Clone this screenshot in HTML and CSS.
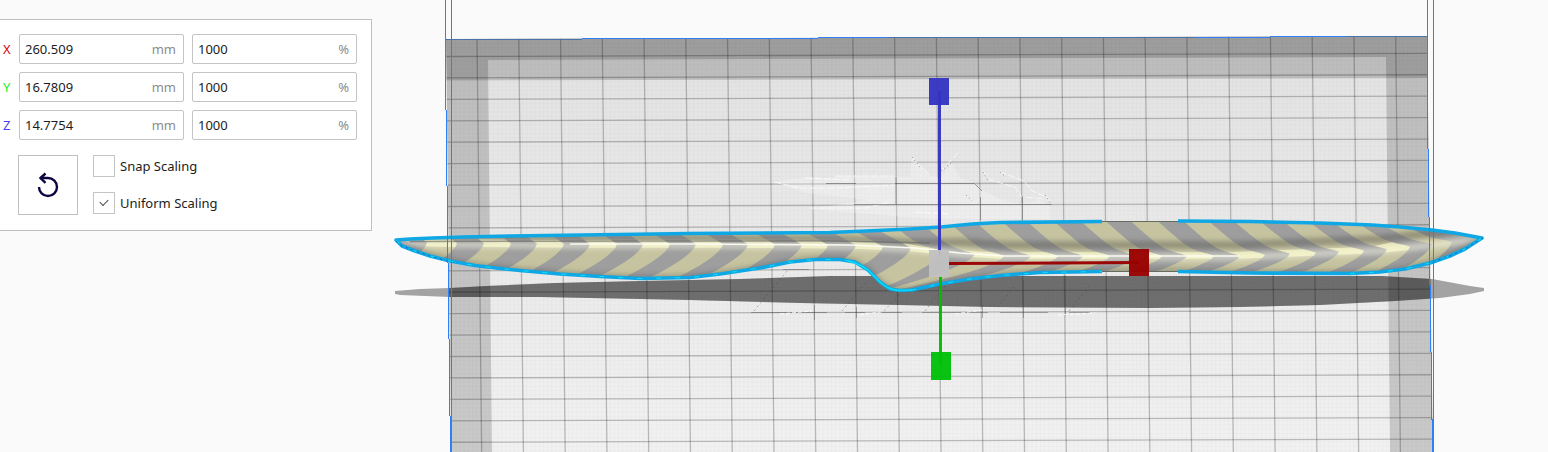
FILE: index.html
```html
<!DOCTYPE html>
<html lang="en">
<head>
<meta charset="utf-8">
<title>Scale tool</title>
<link rel="stylesheet" href="styles.css">
</head>
<body>
<main class="workspace">
<svg class="scene" viewBox="0 0 1548 452" preserveAspectRatio="xMidYMin slice" role="img" aria-label="Build plate with the scaled model">
  <defs>
    <linearGradient id="bedFill" x1="0" y1="0" x2="0" y2="1"><stop offset="0" stop-color="#e2e2e2"/><stop offset="1" stop-color="#f2f2f2"/></linearGradient>
    <pattern id="fine" width="4.176" height="4.286" patternUnits="userSpaceOnUse"><path d="M0 .5H4.2M.5 0V4.3" stroke="#000" stroke-opacity=".025"/></pattern>
    <clipPath id="bedClip"><path d="M446 39 1427 36 1433 452H451Z"/></clipPath>
    <clipPath id="bodyClip"><path id="bodyClipPath"/></clipPath>
    <filter id="soft" x="-5%" y="-100%" width="110%" height="300%"><feGaussianBlur stdDeviation="2.4"/></filter>
  </defs>
  <g clip-path="url(#bedClip)">
    <path d="M440 30H1440V452H440Z" fill="url(#bedFill)"/>
    <path d="M440 30H1440V452H440Z" fill="url(#fine)"/>
    <g id="grid" fill="none" stroke="#000" stroke-opacity=".23" stroke-width="1.300"></g>
    <path d="M440 30H1440V452H1390L1386 57 488 60 492 452H440Z" fill="#000" fill-opacity=".165"/>
    <path d="M440 30H1440V78L440 80.500Z" fill="#000" fill-opacity=".165"/>
  </g>
  <g fill="none">
    <path d="M806 177 830 178 840 176H893L910 177 911 158 919 164 929 175 941 178 952 163 960 178 975 183 983 191 1000 199 1020 204 1040 200 1050 206V219H930L810 209 868 200 806 193 774 182Z" fill="#fff" fill-opacity=".24"/>
    <path d="M774 182 800 188H835L895 185M810 208H865L891 202M835 176H893M806 178 850 180M912 158 929 174M941 171 958 153M983 171 990 180 1015 187 1022 197 1045 199M1000 172 1024 181 1032 191 1047 197 1052 205M915 212 950 214" stroke="#fff" stroke-width="1" stroke-opacity=".7" stroke-dasharray="7 2"/>
    <path d="M826 183.500H856M895 183.500H974M896 177V204M854 204.500H1052M980.500 197V220M974 183 982 191M1022.500 196V220" stroke="#555" stroke-opacity=".55"/>
    <path d="M912 157 920 167M941 171 952 162M983 172 988 180M1000 172 1006 177M1045 195 1052 205M966 195 972 201" stroke="#888" stroke-dasharray="1 3"/>
  </g>
  <path d="M395 291 420 289 450 288 486 286 555 283 640 281 740 279 830 276H1382L1432 279 1470 286 1484 288V291L1470 294 1440 298 1395 301 1320 305 1240 307 1150 308 990 307 900 305 800 303 690 300 540 297 450 297 400 295 395 294Z" fill="#000" fill-opacity=".35"/>
  <path clip-path="url(#bedClip)" d="M395 291 420 289 450 288 486 286 555 283 640 281 740 279 830 276H1382L1432 279 1470 286 1484 288V291L1470 294 1440 298 1395 301 1320 305 1240 307 1150 308 990 307 900 305 800 303 690 300 540 297 450 297 400 295 395 294Z" fill="#000" fill-opacity=".28"/>
  <g fill="none" stroke="#444" stroke-opacity=".6">
    <path d="M751 312.500H827M845 312.500H865M882 312.500H902M922 312.500H988M1000 312.500H1048M1069 312.500H1090M783 269.500H809M814.500 305V320M856.500 307V318M982.500 305V318M1023.500 280V318M1065.500 275V316" stroke-opacity=".4"/>
    <path d="M754 311 788 270M842 311 868 280M884 311 905 288M925 311 950 280M1000 304 1015 285M1069 311 1090 285" stroke-dasharray="2 3" stroke-opacity=".4"/>
    <path d="M780 314 812 311M860 315 880 312M955 314 982 310M1058 315 1095 313" stroke="#fff" stroke-opacity=".9" stroke-dasharray="4 2"/>
  </g>
  <g clip-path="url(#bodyClip)">
    <path d="M390 215H1490V295H390Z" fill="#9e9e9e"/>
    <g id="bands" fill="#c6c4a0"></g>
    <path id="shade" fill="none" stroke="#4d4d48" stroke-width="8" stroke-opacity=".42" filter="url(#soft)"/>
    <path id="glow" fill="none" stroke="#fffff0" stroke-width="7" stroke-opacity=".5" filter="url(#soft)"/>
    <g id="litBands" fill="#ffffd0" fill-opacity=".6"></g>
    <path id="under" fill="none" stroke="#444" stroke-width="7" stroke-opacity=".32" filter="url(#soft)"/>
    <path d="M410 241.500 650 241 830 241 930 243" fill="none" stroke="#666" stroke-opacity=".6" stroke-width="1.500"/>
    <path id="shine" fill="none" stroke="#fffff8" stroke-width="1.600" stroke-opacity=".9"/>
  </g>
  <path d="M1102 221.500H1178M1102 271.500H1178" stroke="#666b60" stroke-width="1"/>
  <g fill="none" stroke="#10a8e4" stroke-width="3.600" stroke-linejoin="round">
    <path id="edgeA"/><path id="edgeB"/>
  </g>
  <path d="M848 261Q858 263 868 270L880 282Q888 290 900 290.500L912 290" fill="none" stroke="#08dcfa" stroke-width="1.600"/>
  <path id="edgeDots" fill="none" stroke="#06e4f5" stroke-width="1" stroke-dasharray="5 14"/>
  <path d="M396 241 402 246 415 251 430 256 450 262M1483 238 1465 249 1450 256 1430 263" fill="none" stroke="#0647c4" stroke-width="1" stroke-opacity=".7" stroke-dasharray="2 4"/>
  <g fill="none" stroke="#2f7ff5" shape-rendering="crispEdges">
    <path d="M445.500 0V71L450.500 452M451.500 0V452M1427.500 0V115L1432.500 452M1433.500 0V452"/>
    <path d="M446 39.500 582 39.500M888 37.500 1195 37.500M1348 36.500 1427 36.500" stroke="#4a72ad"/>
    <path d="M582 38.500H750L888 37.500M1195 37.500 1348 36.500"/>
  </g>
  <g fill-opacity=".96">
    <path d="M938 91H941V256H938Z" fill="#3434bc"/><path d="M929 78H949V105H929Z" fill="#3434c2"/>
    <path d="M939 276H942V366H939Z" fill="#00be00"/><path d="M931 352H951V380H931Z" fill="#00c008"/>
    <path d="M949 262 1139 261V264L949 265Z" fill="#990000"/><path d="M1129 249H1149V276H1129Z" fill="#980000"/>
    <path d="M929 250H949V277H929Z" fill="#c1c1c1"/>
  </g>
</svg>
<form class="panel">
  <div class="row"><span class="axis axis-x">X</span>
    <label class="field"><input aria-label="X size" value="260.509"><span>mm</span></label>
    <label class="field"><input aria-label="X scale" value="1000"><span>%</span></label></div>
  <div class="row"><span class="axis axis-y">Y</span>
    <label class="field"><input aria-label="Y size" value="16.7809"><span>mm</span></label>
    <label class="field"><input aria-label="Y scale" value="1000"><span>%</span></label></div>
  <div class="row"><span class="axis axis-z">Z</span>
    <label class="field"><input aria-label="Z size" value="14.7754"><span>mm</span></label>
    <label class="field"><input aria-label="Z scale" value="1000"><span>%</span></label></div>
  <div class="actions">
    <button class="reset" type="button" aria-label="Reset scaling">
      <svg width="30" height="30" viewBox="0 0 30 30" fill="none" stroke="#0c0640" stroke-width="2.400"><path d="M6 17A9 9 0 1 0 15 8H7"/><path d="M12.500 3.500 7.500 8 12.500 12.800"/></svg>
    </button>
    <div class="options">
      <label class="option"><input type="checkbox">Snap Scaling</label>
      <label class="option"><input type="checkbox" checked>Uniform Scaling</label>
    </div>
  </div>
</form>
</main>
<script src="scene.js"></script>
</body>
</html>
```
FILE: styles.css
```css
* { box-sizing: border-box; }
body {
  margin: 0;
  background: #fafafa;
  color: #1c1c1c;
  font: 13px/18px "Noto Sans", sans-serif;
}
.workspace {
  position: relative;
  min-height: 100vh;
  padding-top: 19px;
  overflow: hidden;
}
.scene {
  position: absolute;
  inset: 0;
  width: 100%;
  height: 100%;
}
.panel {
  position: relative;
  display: flex;
  flex-direction: column;
  gap: 8px;
  width: 372px;
  padding: 14px 14px 15px 0;
  background: #fff;
  border: 1px solid #c0c0c0;
  border-left: 0;
}
.row {
  display: grid;
  grid-template-columns: 11px minmax(0, 1fr) minmax(0, 1fr);
  gap: 8px;
  align-items: center;
}
.axis { padding-left: 3px; }
.axis-x { color: #d80000; }
.axis-y { color: #24f024; }
.axis-z { color: #4a3cf0; }
.field {
  display: flex;
  align-items: center;
  height: 30px;
  padding: 0 7px 0 5px;
  border: 1px solid #c4c4c4;
  border-radius: 2px;
  background: #fff;
}
.field input {
  flex: 1;
  min-width: 0;
  padding: 0;
  border: 0;
  outline: 0;
  background: none;
  color: inherit;
  font: inherit;
}
.field span { color: #8c8c8c; }
.actions {
  display: flex;
  gap: 15px;
  padding: 7px 0 0 18px;
}
.reset {
  display: grid;
  place-items: center;
  width: 60px;
  height: 60px;
  padding: 0;
  border: 1px solid #c0c0c0;
  background: #fff;
}
.options {
  display: flex;
  flex-direction: column;
  gap: 15px;
}
.option {
  display: flex;
  align-items: center;
  gap: 5px;
}
.option input {
  appearance: none;
  display: grid;
  place-items: center;
  width: 22px;
  height: 22px;
  margin: 0;
  border: 1px solid #c4c4c4;
  background: #fff;
}
.option input:checked::before {
  content: "";
  width: 7px;
  height: 4px;
  margin-bottom: 3px;
  border: solid #444;
  border-width: 0 0 1px 1px;
  transform: rotate(-45deg);
}
```
FILE: scene.js
```js
const upper = [[396,240],[410,239],[433,238],[463,237],[510,236],[582,235],[690,233.5],[830,232.5],[866,231],[910,229],[941,227],[972,224],[1000,222.5],[1102,221.5],[1178,221],[1250,221.5],[1320,223],[1372,225],[1400,227],[1432,230],[1455,233],[1482,238]];
const lower = [[396,240],[402,246],[415,251],[430,256],[450,261],[475,265.5],[500,268.5],[520,270.5],[560,274],[600,276.5],[640,278.5],[690,277.5],[720,274],[760,268],[790,262],[815,259.5],[840,259.5],[855,262],[868,270],[880,282],[890,289],[900,290.5],[912,290],[940,284],[970,279],[1000,275.5],[1040,272.5],[1102,271.5],[1178,271.5],[1250,273],[1350,273.5],[1380,272],[1405,269],[1430,263],[1450,256],[1465,249],[1482,238]];
const ridge = [[395,241],[430,243],[570,244],[700,244],[850,245],[915,248],[960,253],[1004,256],[1240,256],[1380,250],[1432,244],[1483,238]];
const edges = [[427,457],[484,511],[537,564],[590,617],[643,670],[696,723],[748,775],[802,828],[856,883],[911,942],[975,1004],[1031,1058],[1083,1110],[1137,1162],[1187,1214],[1240,1265],[1290,1316],[1339,1364],[1387,1410],[1432,1452]];

function at(points, x) {
  let i = 1;
  while (i < points.length - 1 && points[i][0] < x) i++;
  const [a, b] = [points[i - 1], points[i]];
  const t = Math.max(0, Math.min(1, (x - a[0]) / (b[0] - a[0])));
  return a[1] + (b[1] - a[1]) * t;
}
const line = pts => "M" + pts.map(p => p.join(" ")).join(" L");
const el = id => document.getElementById(id);
const shift = (pts, dy) => pts.map(([x, y]) => [x, y + dy]);

function add(parent, d) {
  const p = document.createElementNS("http://www.w3.org/2000/svg", "path");
  p.setAttribute("d", d);
  parent.append(p);
}

// Build plate grid
for (let i = 0; i < 23; i++) {
  const x = 477 + i * 41.76;
  add(el("grid"), `M${x} 36L${x + 4.7} 452`);
}
for (let i = 0; i < 19; i++) {
  const y = 56.5 + i * 21.43;
  add(el("grid"), `M446 ${y}L1434 ${y - 3.2}`);
}

// One side of a stripe, from the upper silhouette through the ridge to the lower one
function side(x) {
  const r = at(ridge, x), pts = [];
  const up = r - 218;
  const reach = at([[400, 30], [700, 42], [860, 50], [960, 60], [1300, 60], [1480, 60]], x);
  const curl = x > 940 ? 0.3 : 0;
  for (let i = 20; i > 0; i--) {
    const t = i / 20;
    const bend = t * t / (t * t + 0.012);
    pts.push([x - reach * (curl * bend + (1 - curl) * t), r - up * t]);
  }
  pts.push([x, r]);
  const down = 295 - r;
  const k = at([[940, 1.7], [1000, 3.4], [1280, 3.2], [1440, 1.6]], x);
  for (let i = 1; i <= 14; i++) {
    const t = i / 14;
    pts.push([x - down * k * Math.pow(t, 1.5), r + down * t]);
  }
  return pts;
}
for (const [a, b] of edges) {
  const left = side(a), right = side(b).reverse();
  add(el("bands"), line([...left, ...right]) + "Z");
  const near = (pts, x) => pts.filter(p => Math.abs(p[1] - at(ridge, x)) < 4.5);
  if (a < 1420) add(el("litBands"), line([...near(left, a), ...near(right, b)]) + "Z");
}

el("bodyClipPath").setAttribute("d", line([...upper, ...[...lower].reverse()]) + "Z");
el("glow").setAttribute("d", line(shift(ridge, 1)));
el("shine").setAttribute("d", line(ridge.slice(2, 9)));
el("shade").setAttribute("d", line(ridge.map(([x, y]) => [x, y - (x > 940 ? 11 : 5)])));
el("under").setAttribute("d", line(lower));
const west = p => p[0] <= 1102, east = p => p[0] >= 1178;
el("edgeA").setAttribute("d", line([...upper.filter(west).reverse(), ...lower.filter(west)]));
el("edgeB").setAttribute("d", line([...upper.filter(east), ...lower.filter(east).reverse()]));
el("edgeDots").setAttribute("d", line(lower.filter(west)) + line(lower.filter(p => p[0] > 1340)));
```
